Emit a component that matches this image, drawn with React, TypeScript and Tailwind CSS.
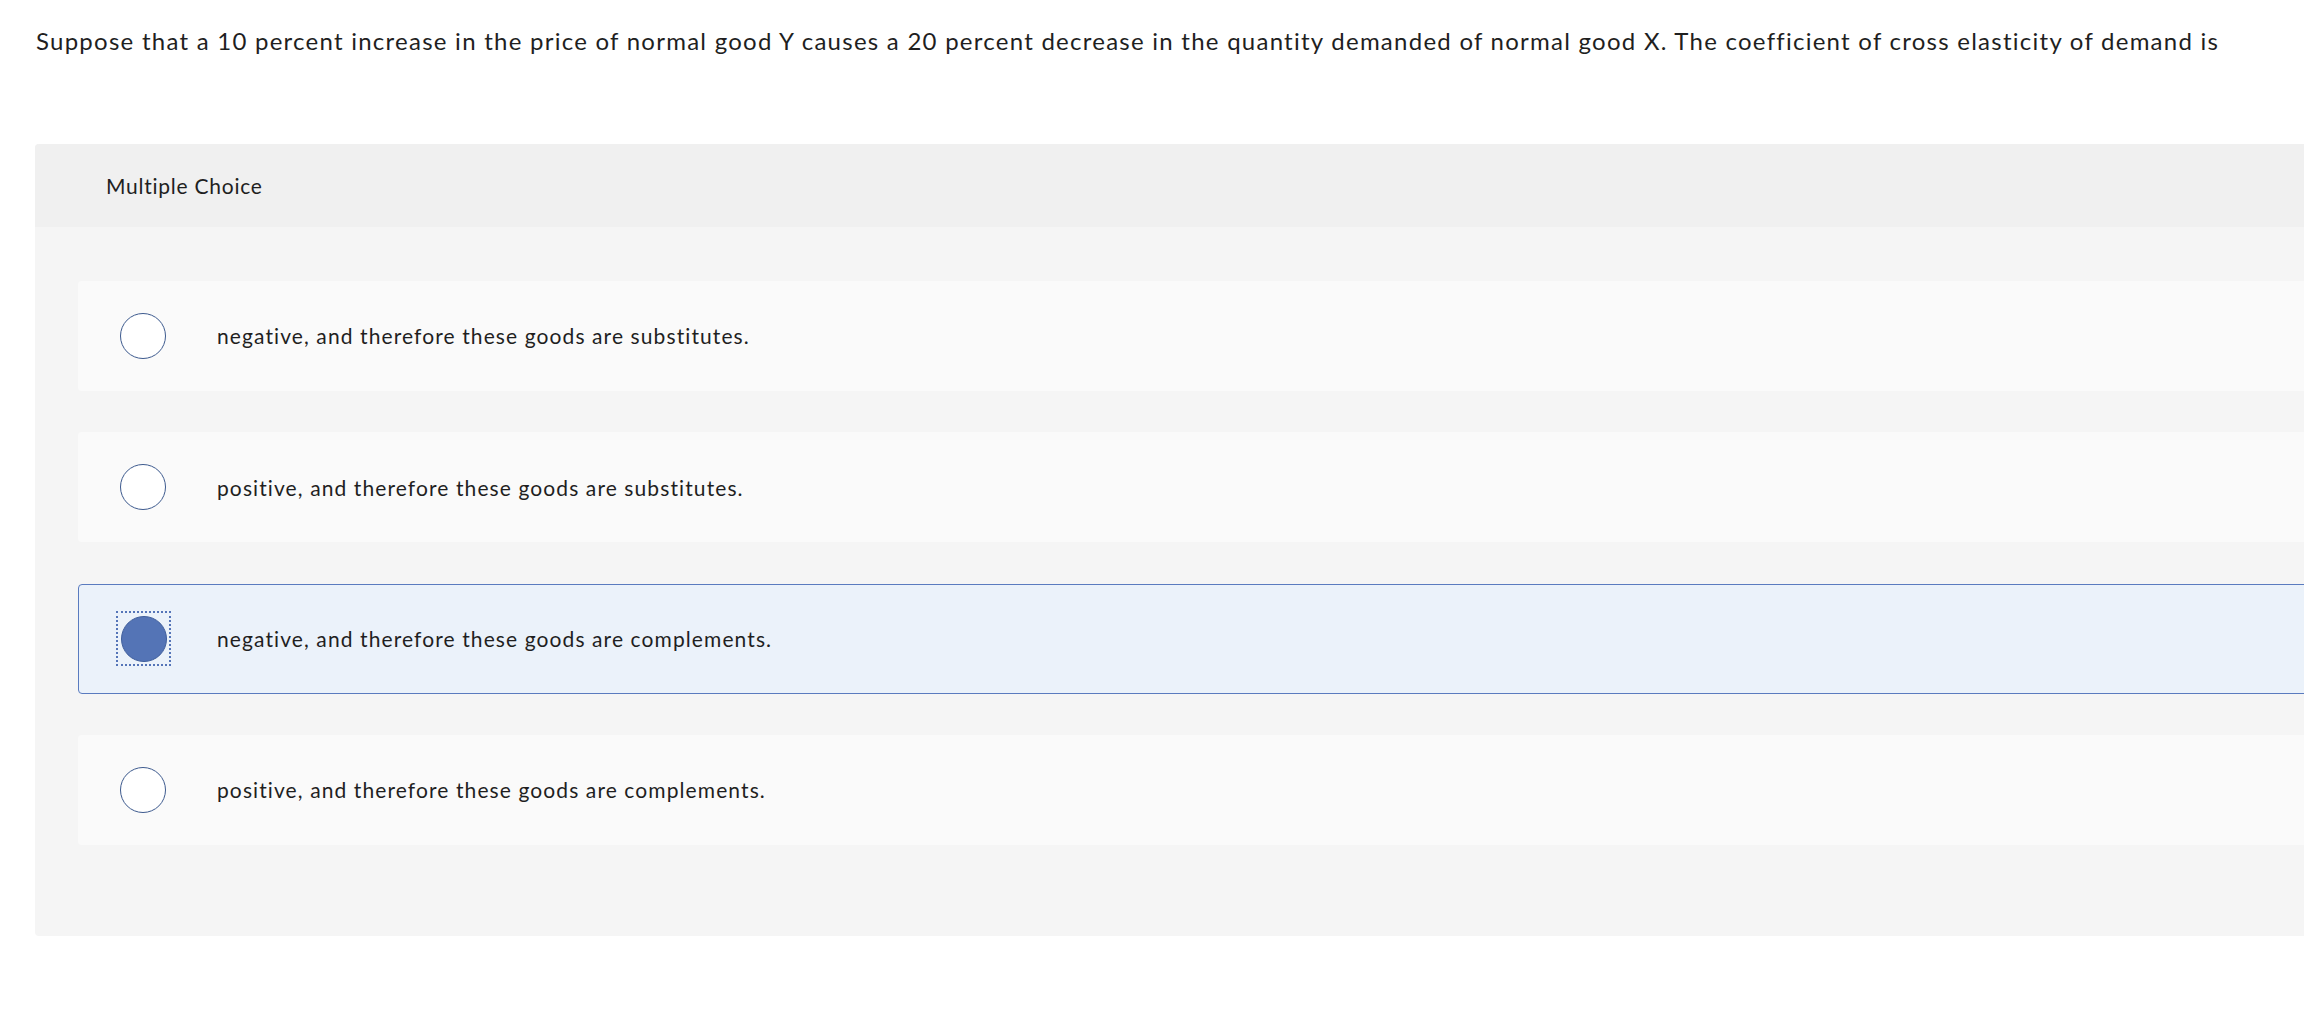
import React from "react";

const options = [
  { text: "negative, and therefore these goods are substitutes.", selected: false },
  { text: "positive, and therefore these goods are substitutes.", selected: false },
  { text: "negative, and therefore these goods are complements.", selected: true },
  { text: "positive, and therefore these goods are complements.", selected: false },
];

export default function App() {
  return (
    <div
      className="w-full min-h-[1013px] overflow-hidden bg-white text-[#1f1f1f]"
      style={{ fontFamily: "Lato, 'Open Sans', 'Liberation Sans', sans-serif" }}
    >
      <p className="pl-[36px] pt-[24px] text-[24px] leading-[34px] tracking-[1.25px] whitespace-nowrap">
        Suppose that a 10 percent increase in the price of normal good Y causes a 20 percent decrease in the quantity demanded of normal good X. The coefficient of cross elasticity of demand is
      </p>
      <div className="ml-[35px] mt-[86px] w-[2340px] rounded-[4px] overflow-hidden bg-[#f5f5f5]">
        <div className="h-[83px] bg-[#f0f0f0] flex items-center pl-[71px] text-[21px] tracking-[0.75px]">
          Multiple Choice
        </div>
        <div className="pl-[43px] pt-[54px] pb-[91px] flex flex-col gap-[41.4px]">
          {options.map((o, i) => (
            <div
              key={i}
              className={
                o.selected
                  ? "h-[110px] flex items-center rounded-[4px] border border-[#5a7bbf] bg-[#ebf2fa] pl-[41px]"
                  : "h-[110px] flex items-center rounded-[4px] border border-transparent bg-[#fafafa] pl-[41px]"
              }
            >
              {o.selected ? (
                <div className="w-[55px] h-[55px] -ml-[4px] -mr-[5px] flex items-center justify-center border-2 border-dotted border-[#5575b8]">
                  <div className="w-[46px] h-[46px] rounded-full bg-[#5474b6] border border-[#3f5e9c]" />
                </div>
              ) : (
                <div className="w-[46px] h-[46px] rounded-full bg-white border border-[#3d5a8e]" />
              )}
              <span className="ml-[51px] text-[21px] tracking-[1.1px]">{o.text}</span>
            </div>
          ))}
        </div>
      </div>
    </div>
  );
}
